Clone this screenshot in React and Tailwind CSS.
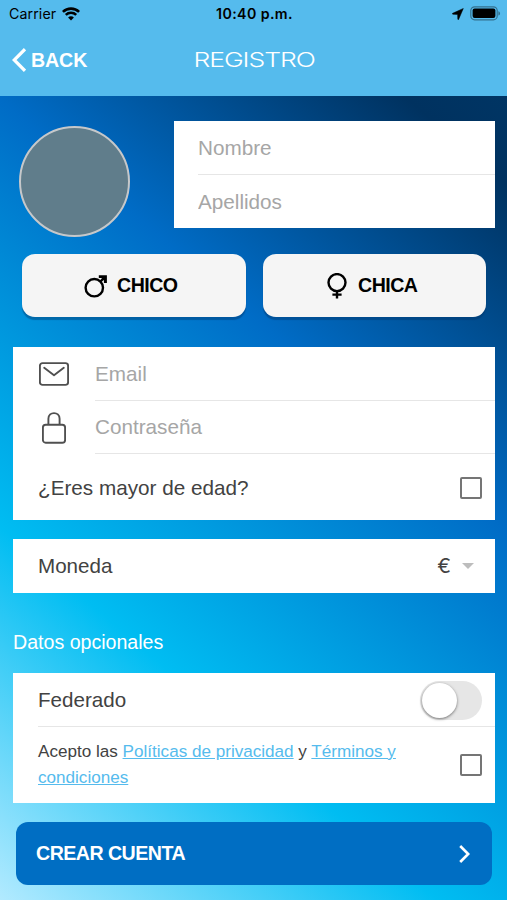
import React, { useState } from 'react';
import clsx from 'clsx';

const WifiIcon = () => (
  <svg className="w-[18px] h-[14px]" viewBox="0 0 18 14" fill="none" stroke="#000" strokeWidth="2.6">
    <path d="M0.9 4.9C5.4 0.5 12.6 0.5 17.1 4.9" />
    <path d="M3.8 7.9C6.7 5.1 11.3 5.1 14.2 7.9" />
    <path d="M9 13.4L6.1 10.4C7.7 8.9 10.3 8.9 11.9 10.4Z" fill="#000" stroke="none" />
  </svg>
);

const LocationIcon = () => (
  <svg className="w-[12px] h-[12px]" viewBox="0 0 12 12">
    <path d="M11.3 0.5L0.6 5.3C0.2 5.5 0.3 6.2 0.7 6.2L5.6 6.4L5.8 11.2C5.8 11.7 6.4 11.8 6.6 11.4Z" fill="#000" stroke="#000" strokeWidth="0.5" strokeLinejoin="round" />
  </svg>
);

const BatteryIcon = () => (
  <svg className="w-[31px] h-[15px]" viewBox="0 0 31 15">
    <rect x="0.8" y="0.8" width="26.4" height="13" rx="3.8" fill="none" stroke="#000" strokeOpacity="0.4" strokeWidth="1.2" />
    <rect x="2.6" y="2.6" width="22.8" height="9.4" rx="2" fill="#000" />
    <path d="M28.4 5.2C30.6 5.9 30.6 8.9 28.4 9.6Z" fill="#000" fillOpacity="0.4" />
  </svg>
);

const MaleIcon = () => (
  <svg className="w-6 h-6" viewBox="0 0 24 24" fill="none" stroke="#000" strokeWidth="2.4">
    <circle cx="10.3" cy="13.7" r="8.7" />
    <path d="M16.3 7.7L21 3" />
    <path d="M14.8 1.2H22.9V9H19.9V6.4L17.4 4H14.8Z" fill="#000" stroke="none" />
  </svg>
);

const FemaleIcon = () => (
  <svg className="w-5 h-[26px]" viewBox="0 0 20 26" fill="none" stroke="#000" strokeWidth="2.4">
    <circle cx="10" cy="9.6" r="8.5" />
    <path d="M10 18V25.6M5.4 21.6H14.6" />
  </svg>
);

const MailIcon = () => (
  <svg className="w-[30px] h-6" viewBox="0 0 30 24" fill="none" stroke="#505050" strokeWidth="1.9" strokeLinecap="round" strokeLinejoin="round">
    <rect x="0.9" y="1.1" width="28.2" height="21.8" rx="2.6" />
    <path d="M5.2 5.8L15 13.2L24.8 5.8" />
  </svg>
);

const LockIcon = () => (
  <svg className="w-6 h-8" viewBox="0 0 24 32" fill="none" stroke="#505050" strokeWidth="1.9">
    <rect x="0.9" y="12.7" width="22.2" height="18" rx="2.8" />
    <path d="M6.4 12.7V6.8C6.4 -0.8 17.6 -0.8 17.6 6.8V12.7" />
  </svg>
);

const Checkbox = ({ checked, onChange }) => (
  <button
    onClick={onChange}
    className={clsx('w-[22px] h-[22px] rounded-[2px] border-2 border-[#757575]', checked && 'bg-[#55bbed]')}
  />
);

const inputClass = 'w-full bg-transparent text-[20.7px] leading-6 text-[#424242] placeholder:text-[#a6a6a6] outline-none';

const App = () => {
  const [gender, setGender] = useState(null);
  const [adult, setAdult] = useState(false);
  const [federated, setFederated] = useState(false);
  const [accepted, setAccepted] = useState(false);

  const genders = [
    { id: 'm', label: 'CHICO', icon: MaleIcon },
    { id: 'f', label: 'CHICA', icon: FemaleIcon },
  ];

  return (
    <div className="w-[507px] h-[900px] overflow-hidden flex flex-col font-['Liberation_Sans',sans-serif] text-[#424242]">
      {/* Header */}
      <header className="h-24 shrink-0 bg-[#55bbed]">
        <div className="h-7 flex items-center justify-between pl-[9px] pr-[6px] font-['Inter',sans-serif] text-black">
          <div className="w-[185px] flex items-center gap-[6px]">
            <span className="text-[14.2px] tracking-[0.1px]">Carrier</span>
            <WifiIcon />
          </div>
          <span className="text-center text-[14.2px] font-semibold tracking-[0.4px] whitespace-nowrap">10:40 p.m.</span>
          <div className="w-[186px] flex items-center justify-end gap-[6px] -mt-px">
            <LocationIcon />
            <BatteryIcon />
          </div>
        </div>
        <div className="h-16 grid grid-cols-3 items-center text-white">
          <button className="flex items-center gap-[5px] pl-3 text-[19.6px] font-bold tracking-[-0.1px]">
            <svg className="w-[14px] h-6" viewBox="0 0 14 24" fill="none" stroke="#fff" strokeWidth="3.2">
              <path d="M13 1.2L2.2 12L13 22.8" />
            </svg>
            <span className="pt-px">BACK</span>
          </button>
          <h1 className="mt-px pl-px text-center font-['Inter',sans-serif] text-[20.4px] font-light tracking-[-0.8px] scale-x-[1.3]">REGISTRO</h1>
        </div>
      </header>

      {/* Form */}
      <main className="flex-1 pl-[13px] pr-3 pt-[25px] bg-[linear-gradient(220.5deg,#003564_0px,#003260_67px,#006cc6_332px,#00bdf2_657px,#b2eaff_941px)]">
        <div className="flex justify-between">
          <div className="ml-[6px] mt-[5px] w-[111px] h-[111px] rounded-full bg-[#607d8b] border-[2.5px] border-[#c6c8ca]" />
          <div className="w-[321px] h-[107px] pl-6 bg-white">
            <div className="h-[54px] flex items-center border-b border-[#e6e6e6]">
              <input className={inputClass} placeholder="Nombre" />
            </div>
            <div className="h-[53px] flex items-center">
              <input className={inputClass} placeholder="Apellidos" />
            </div>
          </div>
        </div>

        <div className="mt-[17px] mx-[9px] grid grid-cols-2 gap-[17px]">
          {genders.map((item) => {
            const Icon = item.icon;
            return (
              <button
                key={item.id}
                onClick={() => setGender(item.id)}
                className={clsx(
                  'h-[63px] pr-1 rounded-[13px] flex items-center justify-center gap-[9px] text-[19.6px] font-bold tracking-[-0.55px] text-black shadow-[0_3px_1px_rgba(0,50,100,0.4)]',
                  gender === item.id ? 'bg-[#d9ecf7]' : 'bg-[#f5f5f5]'
                )}
              >
                <Icon />
                <span className={item.id === 'm' ? 'mr-[2px]' : 'ml-[2px]'}>{item.label}</span>
              </button>
            );
          })}
        </div>

        <div className="mt-[30px] h-[173px] pl-[25px] bg-white">
          <div className="flex">
            <div className="w-[57px] h-[54px] pl-[1px] flex items-center">
              <MailIcon />
            </div>
            <div className="flex-1 h-[54px] flex items-center border-b border-[#e6e6e6]">
              <input className={inputClass} placeholder="Email" />
            </div>
          </div>
          <div className="flex">
            <div className="w-[57px] h-[54px] pl-1 flex items-center">
              <LockIcon />
            </div>
            <div className="flex-1 h-[53px] flex items-center border-b border-[#e6e6e6]">
              <input className={inputClass} placeholder="Contraseña" />
            </div>
          </div>
          <div className="h-[65px] pr-[13px] flex items-center justify-between">
            <span className="text-[20.7px]">¿Eres mayor de edad?</span>
            <Checkbox checked={adult} onChange={() => setAdult(!adult)} />
          </div>
        </div>

        <div className="mt-[19px] h-[54px] pl-[25px] pr-[21px] flex items-center justify-between bg-white text-[20.6px]">
          <span>Moneda</span>
          <div className="flex items-center gap-[11px]">
            <span className="font-['Inter',sans-serif] text-[20.6px]">€</span>
            <svg className="w-3 h-[6px]" viewBox="0 0 12 6">
              <path d="M0 0H12L6 6Z" fill="#bdbdbd" />
            </svg>
          </div>
        </div>

        <h2 className="mt-[37px] h-6 leading-6 text-[19.6px] text-white">Datos opcionales</h2>

        <div className="mt-[19px] h-[130px] pl-[25px] bg-white">
          <div className="h-[54px] pr-[13px] flex items-center justify-between border-b border-[#e6e6e6]">
            <span className="pt-[2px] text-[20.6px]">Federado</span>
            <button
              onClick={() => setFederated(!federated)}
              className={clsx('mt-px w-[62px] h-[39px] p-[2px] rounded-full flex items-center', federated ? 'justify-end bg-[#55bbed]' : 'bg-[#e6e6e6]')}
            >
              <span className="w-[35px] h-[35px] rounded-full bg-white shadow-[0_1px_3px_rgba(0,0,0,0.5)]" />
            </button>
          </div>
          <div className="h-[76px] pr-[13px] flex items-center justify-between">
            <p className="w-[375px] text-[17.1px] leading-[26px]">
              Acepto las <a className="underline text-[#55bbed]">Políticas de privacidad</a> y{' '}
              <a className="underline text-[#55bbed]">Términos y condiciones</a>
            </p>
            <Checkbox checked={accepted} onChange={() => setAccepted(!accepted)} />
          </div>
        </div>

        <button className="mt-[19px] mx-[3px] w-[476px] h-[63px] pl-5 pr-[22px] rounded-[12px] flex items-center justify-between bg-[#006ec3] text-white text-[19.6px] font-bold tracking-[-0.52px]">
          CREAR CUENTA
          <svg className="w-[11px] h-[18px]" viewBox="0 0 11 18" fill="none" stroke="#fff" strokeWidth="2.6">
            <path d="M1.2 1L9.2 9L1.2 17" />
          </svg>
        </button>
      </main>
    </div>
  );
};

export default App;
